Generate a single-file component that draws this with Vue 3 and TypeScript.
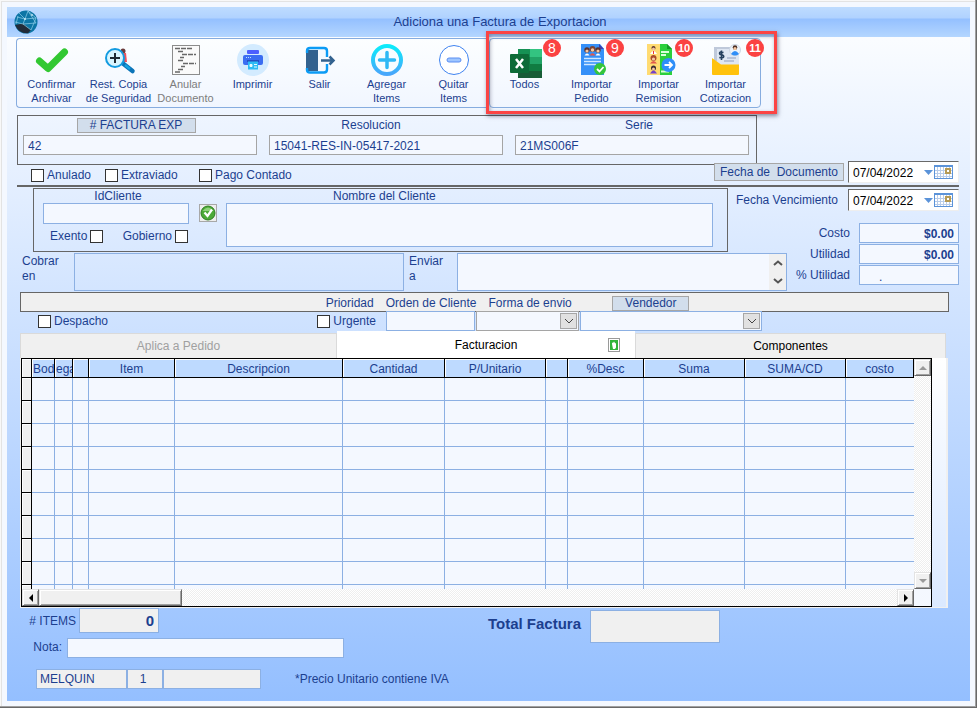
<script setup lang="ts">
import { ref } from 'vue'

interface Tool {
  icon: string
  lines: string[]
  disabled?: boolean
  badge?: string
  badgeLeft?: number
}

const mainTools: Tool[] = [
  { icon: 'check', lines: ['Confirmar', 'Archivar'] },
  { icon: 'search', lines: ['Rest. Copia', 'de Seguridad'] },
  { icon: 'void', lines: ['Anular', 'Documento'], disabled: true },
  { icon: 'print', lines: ['Imprimir'] },
  { icon: 'exit', lines: ['Salir'] },
  { icon: 'add', lines: ['Agregar', 'Items'] },
  { icon: 'remove', lines: ['Quitar', 'Items'] },
]

const importTools: Tool[] = [
  { icon: 'excel', lines: ['Todos'], badge: '8', badgeLeft: 52 },
  { icon: 'order', lines: ['Importar', 'Pedido'], badge: '9', badgeLeft: 48 },
  { icon: 'remission', lines: ['Importar', 'Remision'], badge: '10', badgeLeft: 50 },
  { icon: 'quote', lines: ['Importar', 'Cotizacion'], badge: '11', badgeLeft: 54 },
]

const toolGroups = [
  { name: 'main', tools: mainTools },
  { name: 'import', tools: importTools },
]

const columns: { label: string; width: number | null }[] = [
  { label: '', width: 10 },
  { label: 'Bod', width: 23 },
  { label: 'ega', width: 18 },
  { label: '', width: 16 },
  { label: 'Item', width: 86 },
  { label: 'Descripcion', width: null },
  { label: 'Cantidad', width: 102 },
  { label: 'P/Unitario', width: 101 },
  { label: '', width: 22 },
  { label: '%Desc', width: 76 },
  { label: 'Suma', width: 101 },
  { label: 'SUMA/CD', width: 101 },
  { label: 'costo', width: 68 },
]

const dates = ref({ documento: '07/04/2022', vencimiento: '07/04/2022' })
const totals = ref([
  { id: 'costo', label: 'Costo', value: '$0.00' },
  { id: 'utilidad', label: 'Utilidad', value: '$0.00' },
  { id: 'pct', label: '% Utilidad', value: '.' },
])
</script>

<template>
  <main class="window">
    <div class="client">
      <header class="titlebar">
        <svg class="logo" viewBox="0 0 24 24" aria-hidden="true">
          <circle cx="12" cy="12" r="11.5" fill="#0d75a5" />
          <path d="M1 15 L9 13.500 L17 20 L14 23.300 Q5 24 1 15Z" fill="#222c3a" />
          <path d="M3 7 L11 9 L22 8 M11 9 L9 14 L17 20 L22 8 L14 1 L11 9 L5 3 M9 14 L1 12 M9 14 L22 13 M14 1 L22 13 M4 6 L2 14" fill="none" stroke="#8fd0ea" stroke-width=".7" />
          <circle cx="11" cy="9" r="1" fill="#c5e9f5" /><circle cx="18" cy="5" r=".9" fill="#c5e9f5" />
        </svg>
        <h1>Adiciona una Factura de Exportacion</h1>
      </header>

      <div class="toolbars">
        <div v-for="g in toolGroups" :key="g.name" class="toolbar" :class="g.name" role="toolbar">
          <button v-for="t in g.tools" :key="t.icon" type="button" class="tool" :disabled="t.disabled">
            <svg viewBox="0 0 36 34" aria-hidden="true">
              <path v-if="t.icon === 'check'" d="M5.500 18 L14 25.500 L30.500 9" fill="none" stroke="#32c832" stroke-width="7" stroke-linecap="round" stroke-linejoin="round" />
              <g v-else-if="t.icon === 'search'">
                <circle cx="22" cy="8" r="2.500" fill="#6b3b3b" /><path d="M22 10h3l1 9h-4z" fill="#f0525a" />
                <path d="M22 20.500 L31.500 28" stroke="#0b74b8" stroke-width="4.500" stroke-linecap="round" />
                <path d="M24 22 L29 26" stroke="#17a3e0" stroke-width="2.500" />
                <circle cx="14" cy="15" r="9" fill="#d8f5ff" stroke="#139be0" stroke-width="2" />
                <path d="M14 10v10M9 15h10" stroke="#1e2a33" stroke-width="2" />
              </g>
              <g v-else-if="t.icon === 'void'">
                <rect x="4.500" y="2.500" width="27" height="29" fill="#fafafa" stroke="#8c8c8c" />
                <path d="M7 5.500h17M7 29h6M10 8.500h5M14 11.500h14M12 14.500h4M10 17.500h5M15 20.500h13M13 23.500h4M10 26.500h6" stroke="#686868" stroke-width="1.500" stroke-dasharray="5 1" />
              </g>
              <g v-else-if="t.icon === 'print'">
                <circle cx="18" cy="17" r="16" fill="#d3ebff" />
                <rect x="12" y="7" width="12" height="4" rx="1" fill="#4c5fff" />
                <rect x="8" y="12" width="20" height="10" rx="2" fill="#3b6df2" />
                <path d="M11 14.500h5" stroke="#b7e0ff" stroke-dasharray="1 1" />
                <rect x="12" y="17" width="12" height="2" fill="#244fc0" />
                <rect x="13" y="18.500" width="10" height="8" fill="#2ebcf5" />
                <path d="M15 21.500h2v2h-2zM19 21.500h3M19 24h3" stroke="#e8fbff" fill="#e8fbff" stroke-width="1" />
              </g>
              <g v-else-if="t.icon === 'exit'">
                <rect x="5" y="6" width="20" height="23" rx="3" fill="#f5faff" />
                <path d="M4 7h12v21H4z" fill="#33628f" />
                <path d="M5 10V8q0-3 3-3h14q3 0 3 3v6M5 25v2q0 2.500 3 2.500h14q3 0 3-3V21" fill="none" stroke="#0b9bf5" stroke-width="2.400" />
                <path d="M19 17.500h12M27.500 13.500l4 4-4 4" fill="none" stroke="#33628f" stroke-width="2.500" />
              </g>
              <g v-else-if="t.icon === 'add'">
                <defs><linearGradient id="addRing" x1="0" y1="0" x2="0" y2="1"><stop offset="0" stop-color="#0cebfb" /><stop offset="1" stop-color="#48a6fb" /></linearGradient></defs>
                <circle cx="18" cy="17" r="14" fill="#f8fcff" stroke="url(#addRing)" stroke-width="4" />
                <path d="M18 9.500v15M10.500 17h15" stroke="#2fb8f5" stroke-width="3.500" stroke-linecap="round" />
              </g>
              <g v-else-if="t.icon === 'remove'">
                <circle cx="18" cy="17" r="14.500" fill="#fff" stroke="#3f83f0" />
                <rect x="11" y="15" width="14" height="4" rx="2" fill="#9fc6ff" stroke="#5c8ff2" />
              </g>
              <g v-else-if="t.icon === 'excel'">
                <path d="M11 6h24v29H11z" fill="#21a366" />
                <path d="M11 6h12v8H11z" fill="#169154" /><path d="M23 6h12v8H23z" fill="#33c481" />
                <path d="M11 14h12v7H11z" fill="#117b43" /><path d="M11 21h24v7H11z" fill="#107c41" /><path d="M11 28h24v7H11z" fill="#185c37" />
                <rect x="3" y="11" width="19" height="19" rx="1" fill="#0d6b38" />
                <path d="M9 16l7 9M16 16l-7 9" stroke="#fff" stroke-width="2.500" />
              </g>
              <g v-else-if="t.icon === 'order'">
                <path d="M7 1h19l4 5v26H7z" fill="#3590f8" /><path d="M25 1l5 5h-5z" fill="#3b3fae" />
                <circle cx="13" cy="7" r="2.700" fill="#5b3430" /><circle cx="18.500" cy="6" r="3" fill="#7e4535" /><circle cx="24" cy="7" r="2.700" fill="#5b3430" />
                <circle cx="13" cy="8" r="1.600" fill="#f7c7a0" /><circle cx="18.500" cy="7" r="1.700" fill="#f7c7a0" /><circle cx="24" cy="8" r="1.600" fill="#f7c7a0" />
                <path d="M10.500 12.500q2.500-4 5 0z" fill="#fff" /><path d="M21.500 12.500q2.500-4 5 0z" fill="#fff" /><path d="M15.500 12.500q3-4.500 6 0z" fill="#e2574c" />
                <path d="M10 15.500h17M10 18.500h17M10 21.500h12" stroke="#d0e7ff" stroke-width="1.300" />
                <circle cx="26" cy="26" r="6" fill="#34c53c" /><path d="M23 26l2.500 2.500 4-4.500" fill="none" stroke="#fff" stroke-width="1.800" />
              </g>
              <g v-else-if="t.icon === 'remission'">
                <path d="M16 1h10l5 5v26H16z" fill="#2bcf3c" /><path d="M26 1l5 5h-5z" fill="#159a25" />
                <rect x="6" y="1" width="13" height="31" fill="#ffdb72" />
                <circle cx="12.500" cy="5" r="2" fill="#5b3430" /><circle cx="12.500" cy="15" r="3" fill="#a94b2c" /><circle cx="12.500" cy="25" r="2.500" fill="#3a2b35" />
                <circle cx="12.500" cy="6" r="1.500" fill="#f7c7a0" /><circle cx="12.500" cy="16" r="1.600" fill="#f7c7a0" /><circle cx="12.500" cy="26" r="1.500" fill="#f7c7a0" />
                <path d="M9 11q3.500-6 7 0z" fill="#fff" /><path d="M12 8h1v3h-1z" fill="#e33" /><path d="M9 20.500q3.500-5 7 0z" fill="#e2574c" /><path d="M9 30.500q3.500-6 7 0z" fill="#7541c8" />
                <path d="M20 9h8M20 12h5M20 28.500h8" stroke="#d9ffd9" stroke-width="1.800" />
                <circle cx="27.500" cy="22" r="7" fill="#2f8ef8" /><path d="M23.500 22h7.500M28 19l3 3-3 3" fill="none" stroke="#fff" stroke-width="1.800" />
              </g>
              <g v-else>
                <path d="M6 4h25v22H6z" fill="#dfe7f3" /><path d="M6 4h3v14H6zM6 4h20v2H6z" fill="#bfc9da" />
                <path d="M19 15h9M16 18h10" stroke="#aab6d0" stroke-width="1.500" />
                <path d="M15.500 9.500q-4-1.500-4 .7 0 1.500 2 1.700 2.300.3 2.200 1.900-.4 1.700-4.400.7M13.500 7.500v9.500" fill="none" stroke="#25405f" stroke-width="1.600" />
                <path d="M4 15l9 6.500h18V31q0 1-1 1H5q-1 0-1-1z" fill="#ffc20d" />
                <circle cx="27" cy="7" r="5.500" fill="#eef4fb" stroke="#cdd7e4" /><circle cx="27" cy="4.500" r="2.300" fill="#4a3026" /><circle cx="27" cy="5.500" r="1.600" fill="#f7c7a0" /><path d="M23 11q4-6 8 0-4 3-8 0z" fill="#2f8ef8" />
              </g>
            </svg>
            <span v-for="l in t.lines" :key="l">{{ l }}</span>
            <b v-if="t.badge" class="badge" :class="{ single: t.badge.length === 1 }" :style="{ left: t.badgeLeft + 'px' }">{{ t.badge }}</b>
          </button>
          <div v-if="g.name === 'import'" class="callout"></div>
        </div>
      </div>

      <form class="form" @submit.prevent>
        <section class="invoice">
          <div class="field">
            <button type="button" class="chip"># FACTURA EXP</button>
            <input value="42" aria-label="# FACTURA EXP" />
          </div>
          <div class="field resolution">
            <label for="res">Resolucion</label>
            <input id="res" value="15041-RES-IN-05417-2021" />
          </div>
          <div class="field series">
            <label for="serie">Serie</label>
            <input id="serie" value="21MS006F" />
          </div>
        </section>

        <section class="flags">
          <div class="flag-list">
            <label class="tick"><input type="checkbox" />Anulado</label>
            <label class="tick"><input type="checkbox" />Extraviado</label>
            <label class="tick"><input type="checkbox" />Pago Contado</label>
          </div>
          <button type="button" class="chip date-chip">Fecha de&nbsp; Documento</button>
          <div class="date">
            <input v-model="dates.documento" aria-label="Fecha de Documento" />
            <button type="button" aria-label="Calendario">
              <svg viewBox="0 0 30 16" aria-hidden="true"><path d="M0 6h9l-4.500 5z" fill="#5b93d9" /><rect x="10.500" y="1.500" width="18" height="13" fill="#fff" stroke="#5b93d9" /><path d="M10 1h19v2H10z" fill="#5b93d9" /><path d="M13.500 3v11M16.500 3v11M19.500 3v11M22.500 3v11M25.500 3v11M11 6.500h17M11 9.500h17M11 12.500h17" stroke="#b9cdea" /><rect x="22" y="5" width="4" height="4" fill="#fff" stroke="#b59a55" stroke-width="2" /></svg>
            </button>
          </div>
        </section>

        <section class="parties">
          <div class="customer">
            <div class="ident">
              <label for="idc" class="id-label">IdCliente</label>
              <input id="idc" class="line-input" />
              <div class="id-flags">
                <label class="tick"><span>Exento</span><input type="checkbox" /></label>
                <label class="tick"><span>Gobierno</span><input type="checkbox" /></label>
              </div>
            </div>
            <button type="button" class="verify" aria-label="Verificar cliente">
              <svg viewBox="0 0 16 16" aria-hidden="true"><circle cx="8" cy="8" r="7" fill="#4caa38" stroke="#2d7d22" /><path d="M2.500 6q5.500-7 11 0z" fill="#8fd37b" /><path d="M4.500 7.500l3 3.500 4.500-6.500" fill="none" stroke="#fff" stroke-width="2.200" /></svg>
            </button>
            <div class="name">
              <label for="nom">Nombre del Cliente</label>
              <textarea id="nom"></textarea>
            </div>
          </div>

          <div class="addresses">
            <label for="cob">Cobrar<br />en</label>
            <textarea id="cob" class="clear"></textarea>
            <label for="env">Enviar<br />a</label>
            <div class="scrolled">
              <textarea id="env"></textarea>
              <div class="spin">
                <button type="button" aria-label="Subir"><svg viewBox="0 0 10 6" aria-hidden="true"><path d="M1 5l4-3.500L9 5" /></svg></button>
                <button type="button" aria-label="Bajar"><svg viewBox="0 0 10 6" aria-hidden="true"><path d="M1 1l4 3.500L9 1" /></svg></button>
              </div>
            </div>
          </div>

          <div class="side">
            <div class="due">
              <label for="ven">Fecha Vencimiento</label>
              <div class="date">
                <input id="ven" v-model="dates.vencimiento" />
                <button type="button" aria-label="Calendario">
                  <svg viewBox="0 0 30 16" aria-hidden="true"><path d="M0 6h9l-4.500 5z" fill="#5b93d9" /><rect x="10.500" y="1.500" width="18" height="13" fill="#fff" stroke="#5b93d9" /><path d="M10 1h19v2H10z" fill="#5b93d9" /><path d="M13.500 3v11M16.500 3v11M19.500 3v11M22.500 3v11M25.500 3v11M11 6.500h17M11 9.500h17M11 12.500h17" stroke="#b9cdea" /><rect x="22" y="5" width="4" height="4" fill="#fff" stroke="#b59a55" stroke-width="2" /></svg>
                </button>
              </div>
            </div>
            <div class="totals">
              <template v-for="t in totals" :key="t.id">
                <label :for="t.id">{{ t.label }}</label>
                <input :id="t.id" v-model="t.value" :class="{ pct: t.id === 'pct' }" />
              </template>
            </div>
          </div>
        </section>

        <section class="shipping">
          <div class="cols strip">
            <span class="prio">Prioridad</span>
            <label for="ord">Orden de Cliente</label>
            <label for="fenv" class="ship-label">Forma de envio</label>
            <button type="button" class="chip seller">Vendedor</button>
          </div>
          <div class="cols controls">
            <div class="prio-flags">
              <label class="tick"><input type="checkbox" />Despacho</label>
              <label class="tick"><input type="checkbox" />Urgente</label>
            </div>
            <input id="ord" class="line-input" />
            <div class="pick grey">
              <select id="fenv"><option></option></select>
              <span class="arrow"><svg viewBox="0 0 10 6" aria-hidden="true"><path d="M1 1l4 4 4-4" /></svg></span>
            </div>
            <div class="pick">
              <select aria-label="Vendedor"><option></option></select>
              <span class="arrow"><svg viewBox="0 0 10 6" aria-hidden="true"><path d="M1 1l4 4 4-4" /></svg></span>
            </div>
          </div>
        </section>

        <div class="tabs" role="tablist">
          <button type="button" role="tab" disabled>Aplica a Pedido</button>
          <button type="button" role="tab" class="active" aria-selected="true">
            Facturacion
            <svg viewBox="0 0 12 14" aria-hidden="true"><rect x=".5" y=".5" width="11" height="13" fill="#fff" stroke="#9a9a9a" /><rect x="2" y="2" width="8" height="10" fill="#2fb43a" /><path d="M4 6V4.500L5 5l1-1.500L7 5l1 .5V9.500L7 11H5z" fill="#fff" /></svg>
          </button>
          <button type="button" role="tab">Componentes</button>
        </div>

        <div class="panel">
          <div class="grid">
            <div class="viewport">
              <table>
                <colgroup>
                  <col v-for="(c, i) in columns" :key="i" :style="c.width ? { width: c.width + 'px' } : undefined" />
                </colgroup>
                <thead>
                  <tr><th v-for="(c, i) in columns" :key="i">{{ c.label }}</th></tr>
                </thead>
                <tbody>
                  <tr v-for="r in 10" :key="r"><td v-for="(c, i) in columns" :key="i"></td></tr>
                </tbody>
              </table>
            </div>
            <div class="vbar">
              <button type="button" aria-label="Arriba"><svg viewBox="0 0 8 8" aria-hidden="true"><path d="M0 6h8L4 2z" fill="#9a9a9a" /></svg></button>
              <button type="button" aria-label="Abajo"><svg viewBox="0 0 8 8" aria-hidden="true"><path d="M0 2h8L4 6z" fill="#9a9a9a" /></svg></button>
            </div>
            <div class="hbar">
              <button type="button" aria-label="Izquierda"><svg viewBox="0 0 8 8" aria-hidden="true"><path d="M6 0v8L2 4z" /></svg></button>
              <div class="thumb"></div>
              <button type="button" aria-label="Derecha" class="end"><svg viewBox="0 0 8 8" aria-hidden="true"><path d="M2 0v8l4-4z" /></svg></button>
            </div>
            <div class="corner"></div>
          </div>
        </div>

        <footer class="footer">
          <div class="notes">
            <div class="row"><label for="items" class="items-label"># ITEMS</label><input id="items" class="items" value="0" /></div>
            <div class="row"><label for="nota" class="note-label">Nota:</label><input id="nota" class="line-input note" /></div>
            <div class="row user">
              <input value="MELQUIN" aria-label="Usuario" class="who" /><input value="1" aria-label="Numero" class="num" /><input aria-label="Detalle" class="more" />
              <span class="hint">*Precio Unitario contiene IVA</span>
            </div>
          </div>
          <div class="grand">
            <label for="total">Total Factura</label>
            <input id="total" />
          </div>
        </footer>
      </form>
    </div>
  </main>
</template>

<style>
body {
  margin: 0;
  background: #f4f8ff;
}
</style>

<style scoped>
* {
  box-sizing: border-box;
}
.window {
  min-height: 100vh;
  display: flex;
  padding: 7px;
  background: #f4f8ff;
  box-shadow: inset -1px -1px #696969, inset -2px -2px #a0a0a0, inset 1px 1px #f8f8f8, inset 2px 2px #e3e3e3;
  font: 12px/14px "Liberation Sans", Arial, sans-serif;
  color: #1c3f8f;
}
.client {
  flex: 1;
  min-width: 0;
  background: linear-gradient(#ffffff, #94bfff);
}
button,
input,
textarea,
select {
  font: inherit;
  color: inherit;
  margin: 0;
  padding: 0;
  border: 0;
  border-radius: 0;
  min-width: 0;
}
input,
textarea,
select {
  background: #f4f8ff;
  border: 1px solid #8cb0e3;
  outline: 0;
}
textarea {
  display: block;
  resize: none;
  width: 100%;
}
svg {
  display: block;
}
.titlebar {
  display: flex;
  align-items: center;
  height: 30px;
  padding: 0 8px 0 7px;
  background: linear-gradient(#bedcff 0, #b0d2ff 11px, #94c0ff 12px, #b4d6ff 30px);
}
.logo {
  width: 24px;
  height: 24px;
}
h1 {
  flex: 1;
  margin: 0;
  text-align: center;
  font-size: 13px;
  font-weight: 400;
}
.toolbars {
  display: flex;
  margin: 1px 9px 0;
}
.toolbar {
  position: relative;
  display: flex;
  padding: 0 1px;
  height: 70px;
  border: 1px solid #86acdf;
  border-radius: 4px;
  background: linear-gradient(#fcfeff, #f1f6ff);
}
.toolbar.main {
  width: 473px;
  border-right: 0;
  border-radius: 4px 0 0 4px;
}
.tool {
  position: relative;
  width: 67px;
  padding-top: 4px;
  display: flex;
  flex-direction: column;
  align-items: center;
  background: none;
  font-size: 11px;
  line-height: 14px;
  white-space: nowrap;
}
.tool:disabled {
  color: #7d7d7d;
}
.tool svg {
  width: 36px;
  height: 34px;
  overflow: visible;
}
.badge {
  position: absolute;
  top: 0;
  width: 18px;
  height: 18px;
  border-radius: 50%;
  background: #fb4242;
  color: #fff;
  font-size: 11px;
  line-height: 18px;
  text-align: center;
}
.badge.single {
  font-size: 14px;
  font-weight: 400;
}
.callout {
  position: absolute;
  inset: -8px -17px -7px -4px;
  border: 3px solid #fb4444;
  box-shadow: 1px 2px 4px rgba(30, 30, 60, 0.5), inset 1px 2px 4px rgba(30, 30, 60, 0.4);
  pointer-events: none;
}
.form {
  padding: 7px 11px 12px 10px;
}
.invoice {
  display: grid;
  grid-template-columns: repeat(3, 1fr);
  gap: 12px;
  margin-right: 202px;
  padding: 2px 7px 8px 5px;
  height: 50px;
  border: 1px solid #666;
}
.field {
  display: grid;
  grid-template-rows: 15px 20px;
  gap: 2px;
  justify-items: center;
}
.field input {
  width: 100%;
  padding: 2px 4px 0;
  border-color: #a5a5a5;
}
.chip {
  background: #d2deec;
  border: 1px solid #a6a6a6;
  line-height: 13px;
}
.field .chip {
  width: 119px;
  margin-right: 8px;
}
.resolution label {
  padding-right: 30px;
}
.series label {
  padding-left: 14px;
}
.flags {
  position: relative;
  display: flex;
  align-items: center;
  height: 26px;
  margin-top: -4px;
  padding-bottom: 2px;
  border-bottom: 2px solid #666;
}
.flag-list {
  flex: 1;
  align-self: flex-end;
  display: grid;
  grid-template-columns: 74px 94px auto;
  padding: 0 0 1px 14px;
}
.tick {
  display: flex;
  align-items: center;
  gap: 3px;
  white-space: nowrap;
}
.tick input {
  appearance: none;
  flex: none;
  width: 13px;
  height: 13px;
  background: #fff;
  border: 1px solid #333;
}
.tick input:checked {
  background: #1c3f8f;
}
.date-chip {
  width: 130px;
  height: 18px;
  line-height: 16px;
  margin-right: 4px;
  white-space: nowrap;
}
.date {
  display: flex;
  align-items: center;
  width: 111px;
  height: 22px;
  background: #fff;
  border: 1px solid #eee;
  border-top-color: #696969;
  border-left-color: #696969;
  color: #000;
}
.date input {
  flex: 1;
  height: 18px;
  padding: 2px 0 0 4px;
  border: 0;
  background: #fff;
}
.date button {
  width: 30px;
  margin-right: 4px;
  background: none;
}
.parties {
  display: grid;
  grid-template-columns: minmax(0, 1fr) 59px 172px;
  grid-template-rows: 64px 38px;
  gap: 1px 0;
  padding-top: 1px;
}
.customer {
  grid-area: 1 / 1;
  display: flex;
  margin-left: 16px;
  padding: 0 14px 4px 9px;
  border: 1px solid #666;
}
.ident {
  width: 146px;
}
.id-label {
  display: block;
  height: 14px;
  padding-left: 4px;
  text-align: center;
}
.ident .line-input {
  display: block;
  width: 100%;
  height: 21px;
}
.id-flags {
  display: flex;
  justify-content: space-between;
  padding: 5px 1px 0 7px;
}
.verify {
  width: 18px;
  height: 18px;
  margin: 15px 9px 0 10px;
  border: 1px solid #a8a8a8;
  background: #eee;
}
.name {
  flex: 1;
}
.name label {
  display: block;
  height: 14px;
  padding-left: 107px;
}
.name textarea {
  height: 44px;
}
.addresses {
  grid-area: 2 / 1 / 3 / 3;
  display: grid;
  grid-template-columns: 57px 1fr 53px 1fr;
}
.addresses label {
  padding: 1px 0 0 5px;
  line-height: 15px;
}
.clear {
  background: transparent;
}
.scrolled {
  display: flex;
  border: 1px solid #8cb0e3;
}
.scrolled textarea {
  border: 0;
}
.spin {
  flex: none;
  width: 17px;
  display: flex;
  flex-direction: column;
  background: #f0f0f0;
}
.spin button {
  flex: 1;
  display: grid;
  place-items: center;
  background: none;
}
.spin svg {
  width: 10px;
  height: 6px;
  fill: none;
  stroke: #555;
  stroke-width: 2;
}
.side {
  grid-area: 1 / 2 / 3 / 4;
  padding-top: 1px;
}
.due {
  display: flex;
  justify-content: flex-end;
  align-items: center;
  gap: 10px;
  margin-bottom: 12px;
}
.totals {
  display: grid;
  grid-template-columns: auto 100px;
  justify-content: end;
  align-items: center;
  gap: 1px 9px;
}
.totals label {
  text-align: right;
}
.totals input {
  height: 20px;
  padding: 1px 4px 0;
  text-align: right;
  font-weight: 700;
}
.totals .pct {
  padding: 3px 0 0 19px;
  text-align: left;
  font-weight: 400;
}
.shipping {
  margin: 1px 10px 0 3px;
}
.cols {
  display: grid;
  grid-template-columns: 366fr 90fr 104fr 182fr 187fr;
}
.strip {
  height: 20px;
  background: #f0f0f0;
  box-shadow: inset 0 0 0 1px #666;
  align-items: center;
  padding-top: 2px;
  white-space: nowrap;
}
.prio {
  padding-right: 12px;
  text-align: right;
}
.ship-label {
  padding-left: 12px;
}
.seller {
  width: 77px;
  height: 15px;
  margin-left: 32px;
}
.controls {
  position: relative;
  height: 20px;
  margin-top: -1px;
}
.controls > .line-input {
  margin-right: 1px;
}
.prio-flags {
  display: flex;
  align-items: center;
  justify-content: space-between;
  padding: 0 10px 0 18px;
}
.pick {
  position: relative;
  display: flex;
}
.pick.grey {
  margin-right: 1px;
}
.pick.grey select {
  border: 1px solid #a5a5a5;
}
.pick select {
  flex: 1;
  appearance: none;
}
.arrow {
  position: absolute;
  top: 2px;
  right: 2px;
  width: 17px;
  height: 16px;
  display: grid;
  place-items: center;
  background: #e1e1e1;
  border: 1px solid #a6a6a6;
  pointer-events: none;
}
.arrow svg {
  width: 10px;
  height: 6px;
  fill: none;
  stroke: #444;
}
.tabs {
  display: grid;
  grid-template-columns: 317fr 298fr 311fr;
  align-items: end;
  height: 27px;
  margin: 0 13px 0 3px;
}
.tabs button {
  height: 25px;
  background: #f0f0f0;
  border: 1px solid #dadada;
  border-bottom: 0;
  color: #000;
}
.tabs button:disabled {
  color: #a0a0a0;
}
.tabs .active {
  position: relative;
  height: 27px;
  background: #fff;
  border-color: #fff;
}
.active svg {
  position: absolute;
  top: 6px;
  right: 14px;
  width: 12px;
  height: 14px;
}
.panel {
  margin: 0 11px 0 3px;
  padding-right: 14px;
  border: solid #f0f0f0;
  border-width: 0 2px 1px 1px;
  background: linear-gradient(#fff, #dbe9ff);
}
.grid {
  display: grid;
  grid-template-columns: minmax(0, 1fr) 17px;
  grid-template-rows: 230px 17px;
  border: 1px solid #000;
  background: #f4f8ff;
}
.viewport {
  overflow: hidden;
}
table {
  width: 100%;
  table-layout: fixed;
  border-spacing: 0;
}
th {
  height: 19px;
  padding: 1px 0 0;
  overflow: hidden;
  border-right: 1px solid #000;
  border-bottom: 1px solid #000;
  background: #bedaff;
  box-shadow: inset 1px 1px #fff;
  font-weight: 400;
  line-height: 16px;
  white-space: nowrap;
}
th:first-child {
  background: #f0f0f0;
}
th:nth-child(2),
th:nth-child(3) {
  padding-left: 1px;
  text-align: left;
}
td {
  height: 23px;
  padding: 0;
  border-right: 1px solid #8cb0e3;
  border-bottom: 1px solid #8cb0e3;
}
td:first-child {
  background: #f0f0f0;
  border-color: #000;
  box-shadow: inset 1px 1px #fff;
}
td:last-child {
  border-right: 0;
}
.vbar,
.hbar {
  display: flex;
  background: repeating-conic-gradient(#fff 0 25%, #eee 0 50%) 0 0 / 2px 2px;
}
.vbar {
  flex-direction: column;
  justify-content: space-between;
}
.vbar button,
.hbar button,
.thumb {
  flex: none;
  width: 17px;
  height: 17px;
  display: grid;
  place-items: center;
  background: #f0f0f0;
  border: 1px solid #e3e3e3;
  border-right-color: #696969;
  border-bottom-color: #696969;
  box-shadow: inset 1px 1px #fff, inset -1px -1px #a0a0a0;
}
.vbar svg,
.hbar svg {
  width: 8px;
  height: 8px;
}
.hbar .thumb {
  width: 143px;
}
.hbar .end {
  margin-left: auto;
}
.footer {
  display: flex;
  align-items: flex-start;
  margin-left: 3px;
}
.notes {
  width: 460px;
}
.row {
  display: flex;
  align-items: center;
}
.row + .row {
  margin-top: 5px;
}
.items-label {
  width: 59px;
  padding-right: 3px;
  text-align: right;
}
.row .items {
  width: 80px;
  height: 25px;
  padding-right: 4px;
  background: #f0f0f0;
  text-align: right;
  font-size: 15px;
  font-weight: 700;
}
.note-label {
  width: 47px;
  padding: 0 5px 3px 0;
  text-align: right;
}
.row .note {
  width: 277px;
  height: 20px;
}
.row.user {
  margin: 11px 0 0 16px;
}
.user input {
  height: 20px;
  background: #f0f0f0;
}
.user .who {
  width: 91px;
  padding-left: 3px;
}
.user .num {
  width: 36px;
  padding-right: 4px;
  text-align: center;
}
.user .more {
  width: 98px;
}
.hint {
  margin-left: 34px;
  white-space: nowrap;
}
.grand {
  display: flex;
  align-items: center;
  padding-top: 2px;
}
.grand label {
  width: 110px;
  padding: 0 9px 6px 0;
  text-align: right;
  font-size: 15px;
  font-weight: 700;
  line-height: 18px;
  white-space: nowrap;
}
.grand input {
  width: 130px;
  height: 33px;
  background: #f0f0f0;
}
</style>
